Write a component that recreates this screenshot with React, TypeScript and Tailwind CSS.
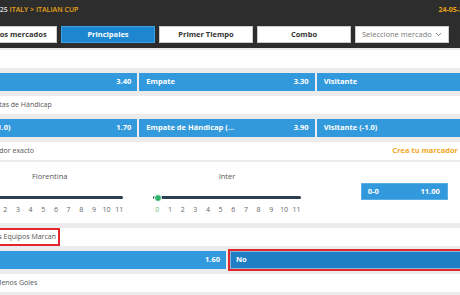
import { ChevronDown } from "lucide-react";
import clsx from "clsx";

const nums = [0, 1, 2, 3, 4, 5, 6, 7, 8, 9, 10, 11];

function Header({ children, right }: { children?: React.ReactNode; right?: React.ReactNode }) {
  return (
    <div className="flex h-[18px] items-center justify-between bg-white pl-[17px] pr-[34px] text-[7px] text-[#555]">
      <span>{children}</span>
      {right}
    </div>
  );
}

function Odd({ label, odds, selected }: { label: string; odds?: string; selected?: boolean }) {
  return (
    <div
      className={
        selected
          ? "-my-[2px] flex items-center border-2 border-[#e3262b] bg-[#1f7ec4] pl-[6px] pr-[6px] text-[7.5px] font-bold text-white shadow-[inset_0_0_0_1px_rgba(255,255,255,0.45)]"
          : "flex items-center bg-[#3399dd] pl-[7px] pr-[6px] text-[7.5px] font-bold text-white"
      }
    >
      <span className="min-w-0 flex-1 truncate">{label}</span>
      {odds && <span className="shrink-0 pl-[6px]">{odds}</span>}
    </div>
  );
}

function TeamSlider({ name }: { name: string }) {
  return (
    <div className="px-[14px] pt-[8px]">
      <div className="text-center text-[7.5px] leading-[13px] text-[#555]">{name}</div>
      <div className="relative mt-[13px] h-[3px] rounded-full bg-[#2c3e50]">
        <span className="absolute left-[1px] top-1/2 h-[8px] w-[8px] -translate-y-1/2 rounded-full border-[1.5px] border-white bg-[#2fb36b]" />
      </div>
      <div className="mt-[5px] flex justify-between text-[7px] leading-[11px] text-[#666]">
        {nums.map((n) => (
          <span key={n} className={n === 0 ? "w-[8px] text-center text-[#6cc06c]" : "w-[8px] text-center"}>
            {n}
          </span>
        ))}
      </div>
    </div>
  );
}

const tabBase = "flex h-[17px] w-[94px] items-center justify-center border text-[7.5px] font-bold";

export default function App() {
  return (
    <div className="h-[295px] w-[460px] overflow-hidden bg-[#ececec] font-['Open_Sans',sans-serif]">
      <div className="-ml-[38px] w-[530px]">
        {/* top bar */}
        <div className="flex h-[20px] items-center justify-between bg-[#2d2d2d] pl-[19px] pr-[17px] text-[7px] font-semibold">
          <span>
            <span className="text-[#dddddd]">2024/25</span>{" "}
            <span className="text-[#e8a317]">ITALY &gt; ITALIAN CUP</span>
          </span>
          <span className="font-bold text-[#e8a317]">24-05-2025</span>
        </div>

        {/* tabs */}
        <div className="flex h-[28px] gap-[4px] bg-[#2d2d2d] pl-[1px] pt-[6px]">
          <div className={clsx(tabBase, "border-[#cccccc] bg-white text-[#333]")}>Todos los mercados</div>
          <div className={clsx(tabBase, "border-[#3fa3e6] bg-[#1c87cf] text-white")}>Principales</div>
          <div className={clsx(tabBase, "border-[#cccccc] bg-white text-[#333]")}>Primer Tiempo</div>
          <div className={clsx(tabBase, "border-[#cccccc] bg-white text-[#333]")}>Combo</div>
          <div className="flex h-[17px] w-[94px] items-center justify-between border border-[#cccccc] bg-white pl-[6px] pr-[5px] text-[7.5px] text-[#777]">
            <span>Seleccione mercado</span>
            <ChevronDown className="h-[9px] w-[9px] text-[#555]" strokeWidth={2} />
          </div>
        </div>

        {/* markets */}
        <div className="flex flex-col gap-[5px] pt-[2px]">
          <Header>1X2</Header>
          <div className="grid h-[18px] grid-cols-3 gap-[2px]">
            <Odd label="Local" odds="3.40" />
            <Odd label="Empate" odds="3.30" />
            <Odd label="Visitante" />
          </div>

          <Header>Apuestas de Hándicap</Header>
          <div className="grid h-[18px] grid-cols-3 gap-[2px]">
            <Odd label="Local (+1.0)" odds="1.70" />
            <Odd label="Empate de Hándicap (..." odds="3.90" />
            <Odd label="Visitante (-1.0)" />
          </div>

          <div className="flex flex-col gap-[2px]">
            <Header right={<span className="text-[7.5px] font-bold text-[#f5a623]">Crea tu marcador</span>}>
              Marcador exacto
            </Header>
            <div className="grid h-[61px] grid-cols-3 gap-[2px] bg-white">
              <TeamSlider name="Fiorentina" />
              <TeamSlider name="Inter" />
              <div className="flex justify-center">
                <div className="mt-[21px] flex h-[17px] w-[87px] items-center justify-between border border-[#5aaee6] bg-[#3399dd] pl-[6px] pr-[7px] text-[7.5px] font-bold text-white">
                  <span>0-0</span>
                  <span>11.00</span>
                </div>
              </div>
            </div>
          </div>

          <div className="flex h-[18px] items-stretch bg-white pl-[13px] text-[7px] text-[#555]">
            <span className="flex items-center border-2 border-[#e3262b] pl-[2px] pr-[2px]">Ambos Equipos Marcan</span>
          </div>
          <div className="grid h-[18px] grid-cols-2 gap-[2px]">
            <Odd label="Sí" odds="1.60" />
            <Odd label="No" selected />
          </div>

          <Header>Más/Menos Goles</Header>
        </div>
      </div>
    </div>
  );
}
